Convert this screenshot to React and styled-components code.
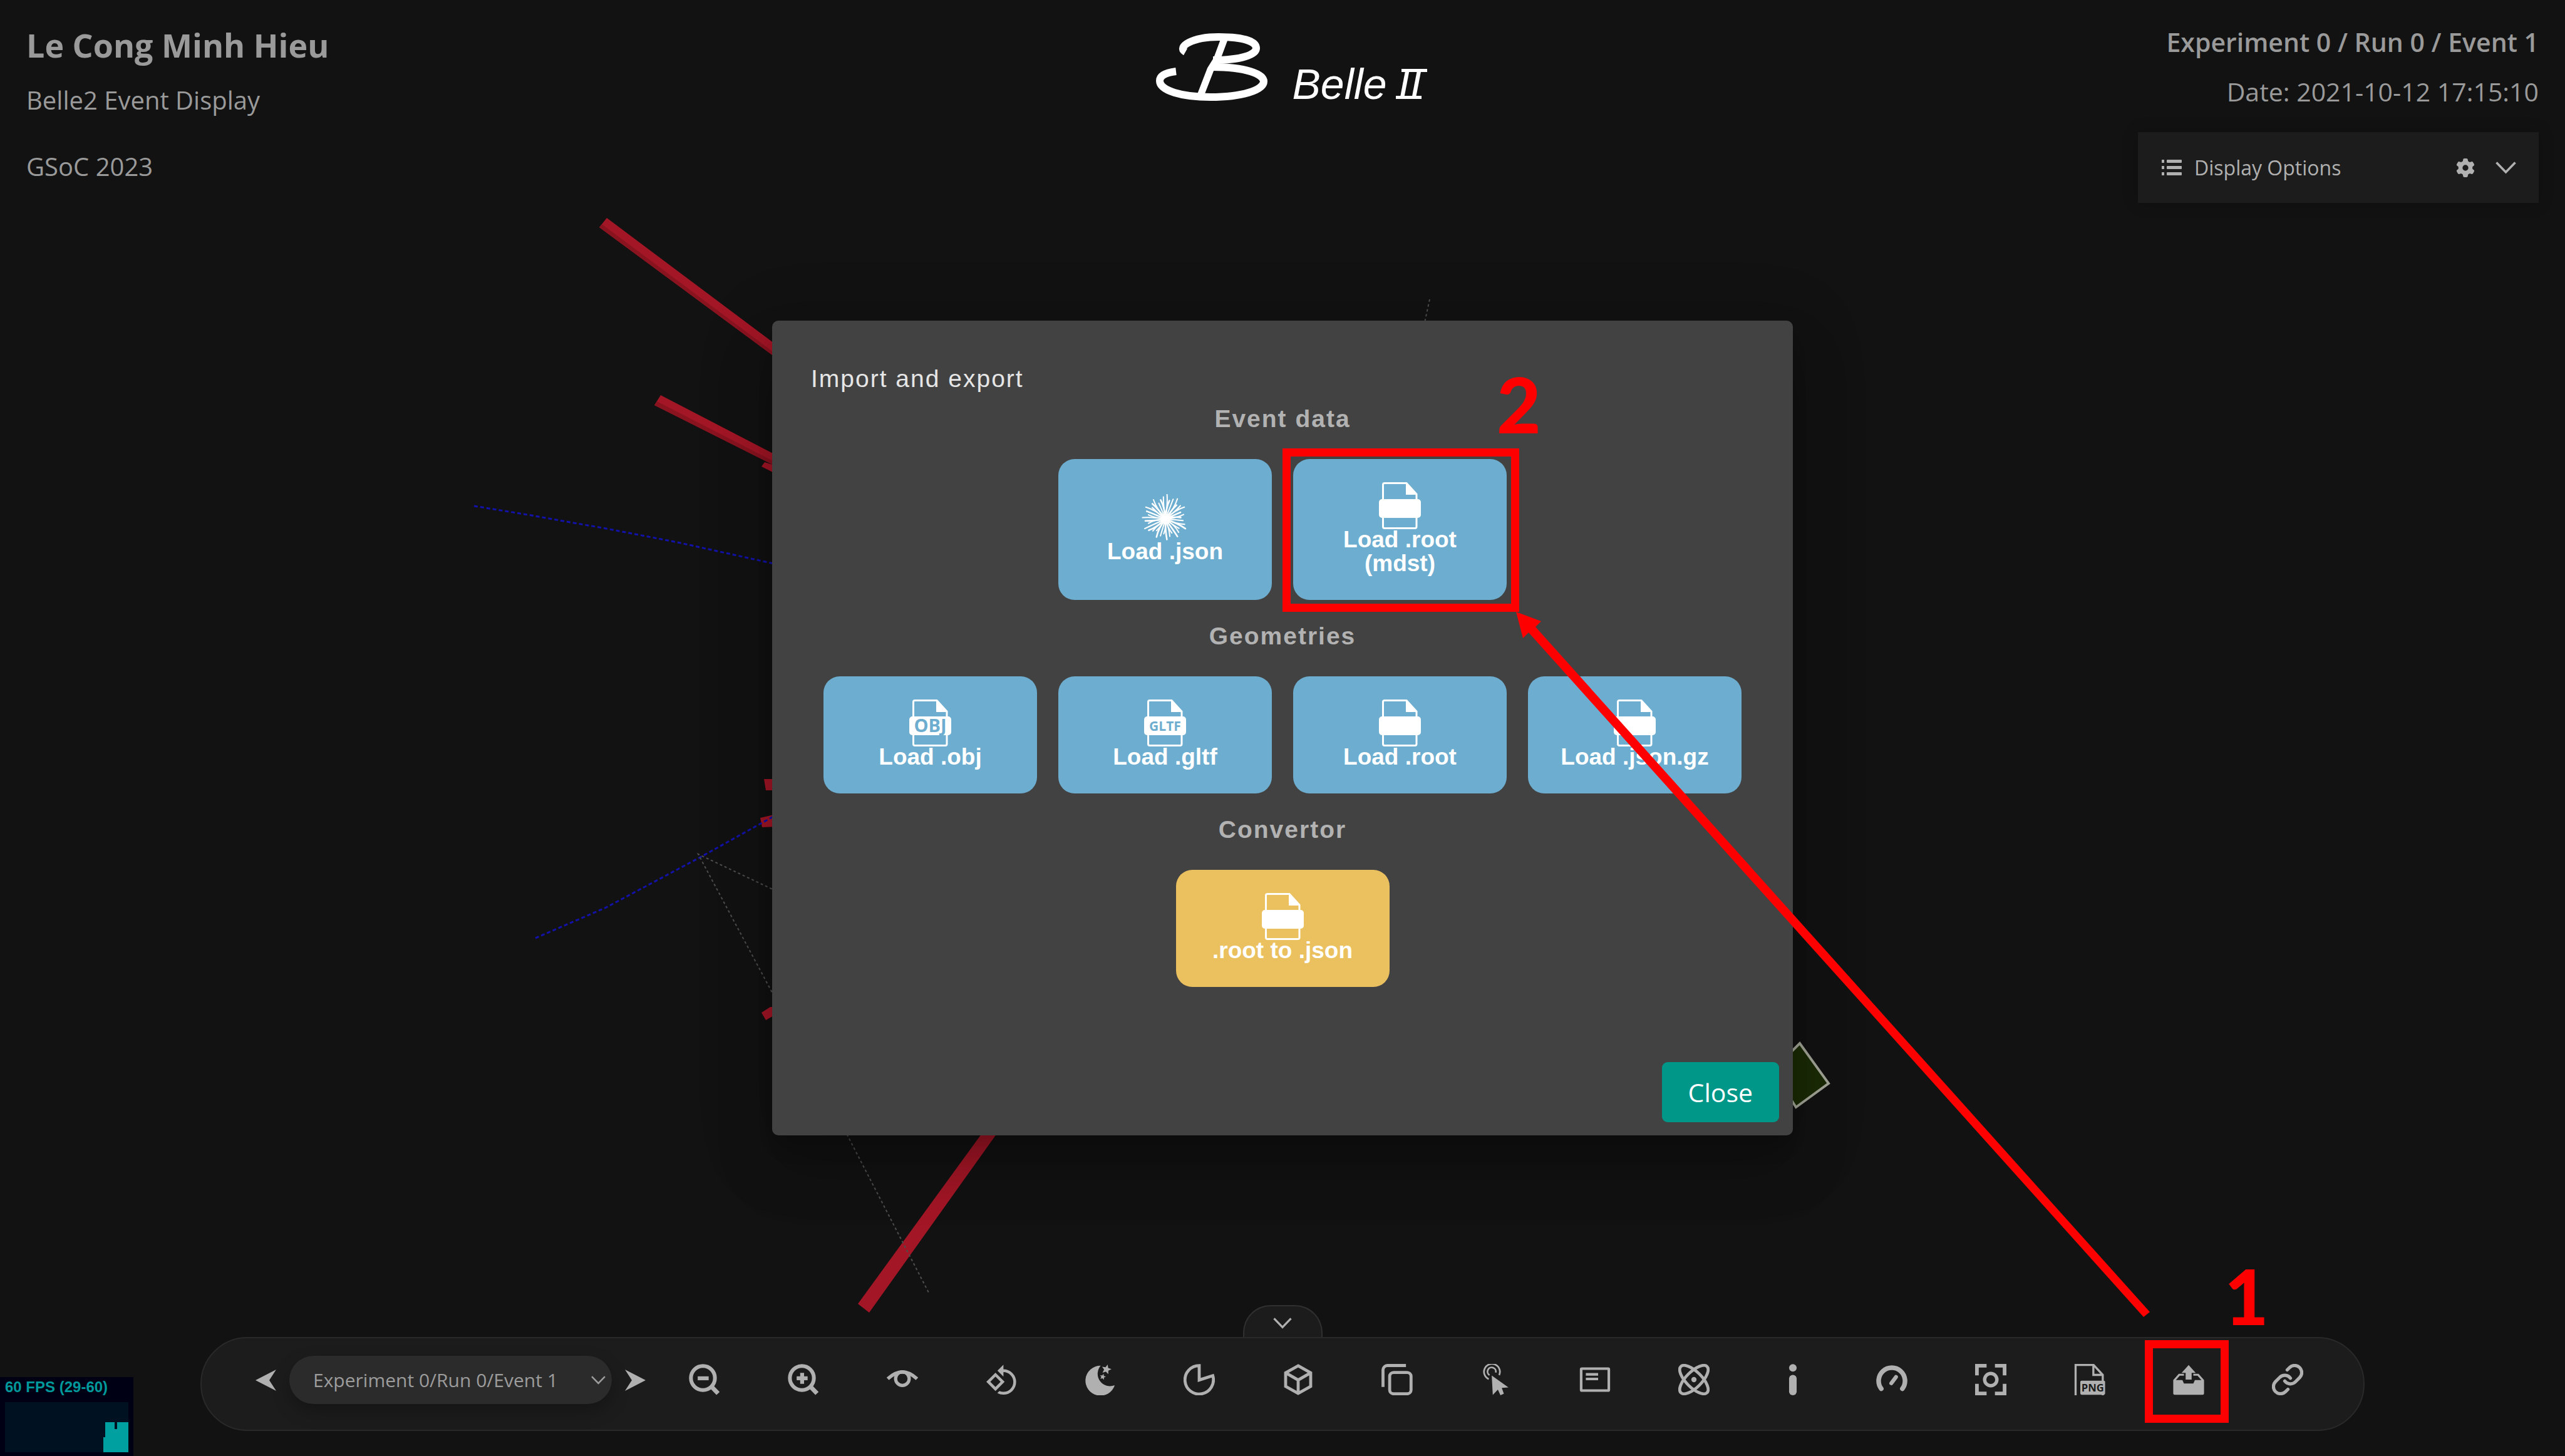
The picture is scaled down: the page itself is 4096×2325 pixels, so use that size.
import React from "react";
import styled, { createGlobalStyle } from "styled-components";
import { FaGear } from "react-icons/fa6";

const uiFont = '"Open Sans", "Noto Sans", sans-serif';
const arial = '"Liberation Sans", Arial, sans-serif';

const GlobalStyle = createGlobalStyle`
  * { box-sizing: border-box; }
  body { margin: 0; background: #121212; font-family: ${uiFont}; }
  button, select { font: inherit; color: inherit; border: 0; margin: 0; padding: 0; background: none; cursor: pointer; }
  h1, h2, h3, p { margin: 0; }
`;

const Page = styled.div`
  position: relative;
  display: flex;
  flex-direction: column;
  justify-content: space-between;
  min-height: 100vh;
  overflow: hidden;
  color: #9a9a9a;
`;

const Overlay = styled.svg`
  position: absolute;
  inset: 0;
  width: 100%;
  height: 100%;
  pointer-events: none;
`;

/* ---------- header ---------- */

const Header = styled.header`
  position: relative;
  display: grid;
  grid-template-columns: 1fr auto 1fr;
  align-items: start;
  padding: 36px 42px 0;
`;

const Name = styled.h1`
  font-size: 52px;
  line-height: 72px;
  font-weight: 700;
`;

const Line = styled.p`
  font-size: 40px;
  line-height: 56px;
`;

const EventLine = styled(Line)`
  font-size: 41px;
  font-weight: ${(p) => (p.$strong ? 600 : 400)};
`;

const Intro = styled.div`
  display: flex;
  flex-direction: column;
  gap: 24px;
`;

const Project = styled.div`
  display: flex;
  flex-direction: column;
  gap: 50px;
`;

const Logo = styled.div`
  display: flex;
  align-items: flex-end;
  gap: 36px;
  padding: 17px 0 0 18px;
  color: #fff;
`;

const LogoText = styled.span`
  display: flex;
  gap: 18px;
  font: italic 68px/54px ${arial};
`;

const Numeral = styled.span`
  position: relative;
  &::before, &::after {
    content: "";
    position: absolute;
    width: 41px;
    height: 5px;
    background: currentColor;
  }
  &::before { top: 3px; left: 5px; }
  &::after { bottom: 3px; left: -4px; }
`;

const EventInfo = styled.div`
  display: flex;
  flex-direction: column;
  align-items: flex-end;
  gap: 23px;
  padding-top: 3px;
`;

const OptionsPanel = styled.div`
  display: flex;
  align-items: center;
  width: 640px;
  height: 113px;
  margin-top: 14px;
  padding: 0 36px 0 38px;
  background: #1c1c1c;
  box-shadow: 0 0 24px rgba(0, 0, 0, 0.2);
  color: #b0b0b0;
`;

const OptionsTitle = styled.span`
  flex: 1;
  margin-left: 20px;
  font-size: 32px;
  line-height: 44px;
`;

const PlainButton = styled.button`
  display: flex;
  margin-left: ${(p) => p.$gap || 0}px;
`;

/* ---------- dialog ---------- */

const Backdrop = styled.div`
  position: absolute;
  inset: 0;
  display: flex;
  align-items: center;
  justify-content: center;
`;

const Dialog = styled.section`
  width: 1630px;
  max-width: 100%;
  padding: 71px 0 21px;
  border-radius: 10px;
  background: #424242;
  box-shadow: 0 26px 35px -16px rgba(0, 0, 0, 0.2),
    0 56px 89px 7px rgba(0, 0, 0, 0.14), 0 21px 108px 19px rgba(0, 0, 0, 0.12);
  font-family: ${arial};
`;

const DialogTitle = styled.h2`
  padding: 0 62px;
  margin-bottom: 20px;
  font-size: 39px;
  line-height: 44px;
  font-weight: 400;
  letter-spacing: 2px;
  color: #e6e6e6;
`;

const Group = styled.section`
  margin-bottom: ${(p) => (p.$last ? 120 : 36)}px;
`;

const GroupTitle = styled.h3`
  margin-bottom: 42px;
  font-size: 39px;
  line-height: 44px;
  font-weight: 700;
  letter-spacing: 2px;
  text-align: center;
  color: #b2b2b2;
`;

const Row = styled.div`
  display: flex;
  justify-content: center;
  gap: 34px;
`;

const LoadButton = styled.button`
  position: relative;
  display: flex;
  flex-direction: column;
  align-items: center;
  justify-content: center;
  width: 341px;
  padding: 37px 40px 39px;
  border-radius: 26px;
  background: ${(p) => (p.$convert ? "#ebc15f" : "#6dadcf")};
  color: #fff;
  font-size: 37px;
  line-height: 38px;
  font-weight: 700;
  svg { margin-bottom: -2px; }
`;

const Actions = styled.div`
  display: flex;
  justify-content: flex-end;
  padding: 0 22px;
`;

const CloseButton = styled.button`
  padding: 21px 42px;
  border-radius: 9px;
  background: #009688;
  color: #fff;
  font: 400 41px/54px ${uiFont};
`;

/* ---------- toolbar ---------- */

const Footer = styled.footer`
  position: relative;
  display: flex;
  flex-direction: column;
  align-items: center;
  padding-bottom: 40px;
`;

const CollapseTab = styled.button`
  display: flex;
  justify-content: center;
  width: 127px;
  height: 51px;
  padding-top: 18px;
  border: 2px solid #303030;
  border-bottom: 0;
  border-radius: 44px 44px 0 0;
  background: #1c1c1c;
  color: #b0b0b0;
`;

const Toolbar = styled.nav`
  display: flex;
  border: 2px solid #292929;
  border-radius: 75px;
  padding: 0 42px 0 86px;
  background: #1c1c1c;
  color: #b0b0b0;
`;

const EventPicker = styled.div`
  display: flex;
  align-items: center;
  gap: 21px;
  padding-bottom: 13px;
  margin-right: 15px;
`;

const SelectBox = styled.label`
  position: relative;
  display: flex;
  align-items: center;
  color: #9c9c9c;
  svg { position: absolute; right: 10px; }
`;

const EventSelect = styled.select`
  appearance: none;
  width: 515px;
  height: 77px;
  padding: 0 38px;
  border-radius: 39px;
  background: #2b2b2b;
  box-shadow: 0 12px 28px rgba(0, 0, 0, 0.25);
  font-size: 30px;
`;

const ToolButton = styled.button`
  position: relative;
  display: flex;
  justify-content: center;
  width: 158px;
  padding: 41px 0 55px;
`;

/* ---------- frame rate meter ---------- */

const Meter = styled.div`
  position: absolute;
  left: 0;
  bottom: 0;
  width: 213px;
  padding: 2px 8px 6px;
  background: #000014;
  color: #00999b;
  font: 700 24px/27px ${arial};
  white-space: nowrap;
  svg { display: block; margin-top: 11px; }
`;

/* ---------- step markers ---------- */

const Marker = styled.span`
  position: absolute;
  left: ${(p) => p.$left}px;
  top: ${(p) => p.$top}px;
  width: ${(p) => p.$width}px;
  height: ${(p) => p.$height}px;
  border: 13px solid #f00;
`;

const Step = styled.span`
  position: absolute;
  left: ${(p) => p.$left}px;
  bottom: calc(100% + 23px);
  font: 900 122px/122px Lato, sans-serif;
  color: #f00;
`;

/* ---------- drawings ---------- */

const Chevron = ({ width = 33, height = 20 }) => (
  <svg width={width} height={height} viewBox="0 0 33 20" fill="none" stroke="currentColor" strokeWidth="3.6">
    <path d="M1.5 1.5L16.5 17L31.5 1.5" />
  </svg>
);

const Arrow = ({ flip }) => (
  <svg width="33" height="34" viewBox="0 0 33 34" fill="currentColor">
    <path d={flip ? "M33 17L0 0L11 17L0 34Z" : "M0 17L33 0L22 17L33 34Z"} />
  </svg>
);

const ListIcon = () => (
  <svg width="32" height="26" viewBox="0 0 32 26" fill="currentColor">
    {[0, 10, 20].map((y) => (
      <g key={y}>
        <rect x="0" y={y} width="4" height="5" />
        <rect x="8" y={y} width="24" height="5" rx="1" />
      </g>
    ))}
  </svg>
);

const BelleMark = () => (
  <svg width="184" height="108" viewBox="0 0 184 108" fill="none" stroke="currentColor">
    <path strokeWidth="12" d="M50 30C36 22 60 6 103 6C145 6 163 14 163 24C163 34 140 43 94 43" />
    <path strokeWidth="12" d="M94 54C145 54 175 65 175 77C175 91 140 102 90 102C45 102 9 92 9 76C9 68 18 63 35 61" />
    <path strokeWidth="11" d="M113 7L100 42L90 58L73 102" />
  </svg>
);

const starPath = (cx, cy, r) =>
  "M" +
  Array.from({ length: 10 }, (_, i) => {
    const a = -Math.PI / 2 + 0.25 + (i * Math.PI) / 5;
    const d = i % 2 ? r * 0.45 : r;
    return `${(cx + d * Math.cos(a)).toFixed(2)} ${(cy + d * Math.sin(a)).toFixed(2)}`;
  }).join("L") +
  "Z";

const Tool = ({ children, box = "0 0 24 24" }) => (
  <svg width="50" height="50" viewBox={box} fill="none" stroke="currentColor" strokeWidth="2.3">
    {children}
  </svg>
);

const lens = (
  <>
    <circle cx="10.8" cy="10.8" r="9.2" strokeWidth="2.9" />
    <path d="M17.2 17.2L22.4 22.6" strokeWidth="3.4" />
  </>
);

const solid = { fill: "currentColor", stroke: "none" };

const tools = [
  ["Zoom out", <Tool>{lens}<path d="M6.8 11H15.2" strokeWidth="3" /></Tool>],
  ["Zoom in", <Tool>{lens}<path d="M6.8 11H15.2M11 6.8V15.2" strokeWidth="3" /></Tool>],
  ["View options", <Tool><path d="M.8 11.4Q12 1 23.2 11.4" strokeWidth="2.6" /><circle cx="12" cy="11.3" r="5.2" strokeWidth="2.5" /></Tool>],
  ["Auto-rotate", <Tool box="0.4 0.2 22.2 22.2"><path {...solid} d="M7.34 6.41L.86 12.9l6.49 6.48 6.49-6.48-6.5-6.49zM3.69 12.9l3.66-3.66L11 12.9l-3.66 3.66-3.65-3.66zm15.67-6.26C17.61 4.88 15.3 4 13 4V.76L8.76 5 13 9.24V6c1.79 0 3.58.68 4.95 2.05a7.007 7.007 0 010 9.9A6.973 6.973 0 0113 20c-.97 0-1.94-.21-2.84-.61l-1.49 1.49C10.02 21.62 11.51 22 13 22c2.3 0 4.61-.88 6.36-2.64a8.98 8.98 0 000-12.72z" /></Tool>],
  ["Dark theme", <Tool><g {...solid}><path d="M12.3 1.3A9.5 9.5 0 0 0 23.1 16.3A11.5 11.5 0 1 1 12.3 1.3Z" /><path d={starPath(16.7, 4.2, 3.9)} /><path d={starPath(13.9, 9.9, 2.4)} /></g></Tool>],
  ["Clipping", <Tool><path d="M12 1.3V12.3L22.4 9A10.9 10.9 0 1 1 12 1.3Z" /></Tool>],
  ["Perspective", <Tool><path d="M12 1.4L21.6 6.8V17.2L12 22.6L2.4 17.2V6.8ZM2.4 6.8L12 12.3L21.6 6.8M12 12.3V22.6" /></Tool>],
  ["Overlay view", <Tool><rect x="6.3" y="6.5" width="16.4" height="16.4" rx="3" /><path d="M18.8 1.2H4.6A3.4 3.4 0 0 0 1.2 4.6V17.6" /></Tool>],
  ["Select object", <Tool><path {...solid} d="M8.7 8.9L9.5 23.7L13.4 19.7L15.4 24L18 22.8L16.4 18.4L21.5 18Z" /><g strokeWidth="1.3"><path d="M6.4 11.6A6.1 6.1 0 1 1 14.4 8.6" /><path d="M7 8.6A3.2 3.2 0 1 1 11.8 6.6" /></g></Tool>],
  ["Object info", <Tool><rect x="1.4" y="3.6" width="21.2" height="16.8" rx=".5" strokeWidth="2" /><path d="M5 8H14.4M5 11.5H14.4" strokeWidth="2" /></Tool>],
  ["Event generator", <Tool><ellipse cx="12" cy="12" rx="14.2" ry="6" transform="rotate(45 12 12)" /><ellipse cx="12" cy="12" rx="14.2" ry="6" transform="rotate(-45 12 12)" /><circle cx="12" cy="12" r="2" {...solid} /></Tool>],
  ["Information", <Tool><g {...solid}><circle cx="12" cy="3" r="2.9" /><rect x="9.1" y="8.4" width="5.8" height="15.6" rx="2.8" /></g></Tool>],
  ["Performance", <Tool><g strokeLinecap="round"><path d="M3.9 19A10.1 10.1 0 1 1 20.1 19" strokeWidth="3.6" /><path d="M11.6 14.8L15.2 10" strokeWidth="3" /></g></Tool>],
  ["Full screen", <Tool><path d="M1.4 8.8V1.4H8.8M15.2 1.4H22.6V8.8M22.6 15.2V22.6H15.2M8.8 22.6H1.4V15.2" strokeWidth="2.8" /><circle cx="12" cy="12" r="4.7" strokeWidth="2.6" /></Tool>],
  ["Save picture", <Tool><path d="M1.2 24V.8H15L22 8.4V13M14.8 .8V8.4H22M22 22V24" strokeWidth="1.6" /><rect x="4.8" y="12.8" width="19" height="10.8" rx="1" {...solid} /><text x="14.3" y="21.2" textAnchor="middle" fontFamily="Open Sans" fontWeight="700" fontSize="8" fill="#1c1c1c" stroke="none">PNG</text></Tool>],
  ["Import and export", <Tool><g {...solid}><path d="M12 .8L17.4 6.8H14.3V12H9.7V6.8H6.6Z" /><path d="M.2 12.4L4.4 7.6H8.4V9H5.2L2.2 12.4H7.2L8.4 15H15.6L16.8 12.4H21.8L18.8 9H15.6V7.6H19.6L23.8 12.4V22.4Q23.8 23.6 22.6 23.6H1.4Q.2 23.6 .2 22.4Z" /></g></Tool>],
  ["Share link", <Tool box="1 1 22 22"><g strokeWidth="2.3" strokeLinecap="round"><path d="M10 13a5 5 0 0 0 7.54.54l3-3a5 5 0 0 0-7.07-7.07l-1.72 1.71" /><path d="M14 11a5 5 0 0 0-7.54-.54l-3 3a5 5 0 0 0 7.07 7.07l1.71-1.71" /></g></Tool>],
];

const FileIcon = ({ tag, size, ink = "#6dadcf" }) => (
  <svg width="67" height="75" viewBox="0 0 67 75" fill="#fff">
    <path d="M6.5 28V4Q6.5 1.5 9 1.5H44L60 19V28M6.5 55V71Q6.5 73.5 9 73.5H57.500Q60 73.500 60 71V55" fill="none" stroke="#fff" strokeWidth="3" />
    <path d="M43 1L61 20H43Z" />
    <rect x="0" y="27" width="67" height="30" rx="5" />
    {tag && (
      <text x="33.500" y={42 + size * 0.36} textAnchor="middle" fontFamily="Open Sans" fontWeight="700" fontSize={size} fill={ink}>
        {tag}
      </text>
    )}
  </svg>
);

const BurstIcon = () => (
  <svg width="75" height="75" viewBox="0 0 75 75" fill="none" stroke="#fff" strokeLinecap="round">
    {Array.from({ length: 38 }, (_, i) => {
      const a = (i * 2 * Math.PI) / 38;
      const r = 25 + ((i * 17) % 13);
      const bend = a + (((i * 7) % 5) - 2) * 0.09;
      const x = 37.5 + r * Math.cos(a);
      const y = 37.5 + r * Math.sin(a);
      const mx = 38 + r * 0.6 * Math.cos(bend);
      const my = 38 + r * 0.6 * Math.sin(bend);
      return <path key={i} strokeWidth={i % 3 ? 2 : 2.6} d={`M38 40Q${mx.toFixed(1)} ${my.toFixed(1)} ${x.toFixed(1)} ${y.toFixed(1)}`} />;
    })}
    <circle cx="38" cy="40" r="8" fill="#fff" stroke="none" />
  </svg>
);

const Scene = () => (
  <Overlay viewBox="0 0 4096 2325" preserveAspectRatio="none" aria-hidden="true">
    <g fill="#a31626">
      <path d="M957 363L969 348L1240 551V572Z" />
      <path d="M1045 647L1055 631L1240 727V745Z" />
      <path d="M1216 745L1221 738L1240 744V757Z" />
      <path d="M1220 1244H1240V1262H1223Z" />
      <path d="M1214 1306L1240 1300V1320L1217 1321Z" />
      <path d="M1216 1617L1230 1608H1240V1619L1223 1629Z" />
      <path d="M1370 2082L1573 1803H1597L1388 2096Z" />
    </g>
    <g fill="#8a1320">
      <path d="M957 363L1240 572V566L961 358Z" />
      <path d="M1045 647L1240 745V739L1049 641Z" />
    </g>
    <path d="M2850 1690L2874 1666L2920 1730L2868 1768L2850 1740Z" fill="#1b2b06" stroke="#a3a697" strokeWidth="4" />
    <g fill="none" stroke="#1212a8" strokeWidth="3" strokeDasharray="6 4">
      <path d="M757 808L837 821L968 844L1082 866L1240 901" />
      <path d="M855 1498L968 1449L1118 1369L1240 1301" />
    </g>
    <g fill="none" stroke="#4e4e4e" strokeWidth="2" strokeDasharray="4 4">
      <path d="M1240 1423L1115 1364L1240 1598" />
      <path d="M1345 1797L1484 2066" />
      <path d="M2283 478L2275 515" />
    </g>
  </Overlay>
);

export default function App() {
  return (
    <Page>
      <GlobalStyle />
      <Scene />

      <Header>
        <Intro>
          <Name>Le Cong Minh Hieu</Name>
          <Project>
            <Line>Belle2 Event Display</Line>
            <Line>GSoC 2023</Line>
          </Project>
        </Intro>
        <Logo>
          <BelleMark />
          <LogoText>
            <span>Belle</span>
            <Numeral>II</Numeral>
          </LogoText>
        </Logo>
        <EventInfo>
          <EventLine $strong>Experiment 0 / Run 0 / Event 1</EventLine>
          <EventLine>Date: 2021-10-12 17:15:10</EventLine>
          <OptionsPanel>
            <ListIcon />
            <OptionsTitle>Display Options</OptionsTitle>
            <PlainButton aria-label="Settings"><FaGear size={30} /></PlainButton>
            <PlainButton $gap={33} aria-label="Expand"><Chevron /></PlainButton>
          </OptionsPanel>
        </EventInfo>
      </Header>

      <Footer>
        <CollapseTab aria-label="Hide toolbar"><Chevron width={30} height={18} /></CollapseTab>
        <Toolbar>
          <EventPicker>
            <PlainButton aria-label="Previous event"><Arrow /></PlainButton>
            <SelectBox>
              <EventSelect aria-label="Event">
                <option>Experiment 0/Run 0/Event 1</option>
              </EventSelect>
              <Chevron width={23} height={14} />
            </SelectBox>
            <PlainButton aria-label="Next event"><Arrow flip /></PlainButton>
          </EventPicker>
          {tools.map(([label, icon]) => (
            <ToolButton key={label} aria-label={label}>
              {icon}
              {label === "Import and export" && (
                <Marker $left={9} $top={3} $width={134} $height={132}>
                  <Step $left={114}>1</Step>
                </Marker>
              )}
            </ToolButton>
          ))}
        </Toolbar>
      </Footer>

      <Meter>
        60 FPS (29-60)
        <svg width="197" height="80" viewBox="0 0 197 80">
          <rect width="197" height="80" fill="#001122" />
          <path d="M157 80V56H160V32H175V43H179V32H197V80Z" fill="#00a0a0" />
        </svg>
      </Meter>

      <Backdrop>
        <Dialog role="dialog" aria-labelledby="io-title">
          <DialogTitle id="io-title">Import and export</DialogTitle>
          <Group>
            <GroupTitle>Event data</GroupTitle>
            <Row>
              <LoadButton><BurstIcon />Load .json</LoadButton>
              <LoadButton>
                <FileIcon />
                Load .root (mdst)
                <Marker $left={-17} $top={-17} $width={378} $height={261}>
                  <Step $left={329}>2</Step>
                </Marker>
              </LoadButton>
            </Row>
          </Group>
          <Group>
            <GroupTitle>Geometries</GroupTitle>
            <Row>
              <LoadButton><FileIcon tag="OBJ" size={29} />Load .obj</LoadButton>
              <LoadButton><FileIcon tag="GLTF" size={21} />Load .gltf</LoadButton>
              <LoadButton><FileIcon />Load .root</LoadButton>
              <LoadButton><FileIcon />Load .json.gz</LoadButton>
            </Row>
          </Group>
          <Group $last>
            <GroupTitle>Convertor</GroupTitle>
            <Row>
              <LoadButton $convert><FileIcon />.root to .json</LoadButton>
            </Row>
          </Group>
          <Actions>
            <CloseButton>Close</CloseButton>
          </Actions>
        </Dialog>
      </Backdrop>

      <Overlay viewBox="0 0 4096 2325" preserveAspectRatio="none" aria-hidden="true">
        <path fill="#f00" d="M2421 977L2461 992L2452 1001L3433 2095L3423 2103L2441 1010L2432 1019Z" />
      </Overlay>
    </Page>
  );
}
